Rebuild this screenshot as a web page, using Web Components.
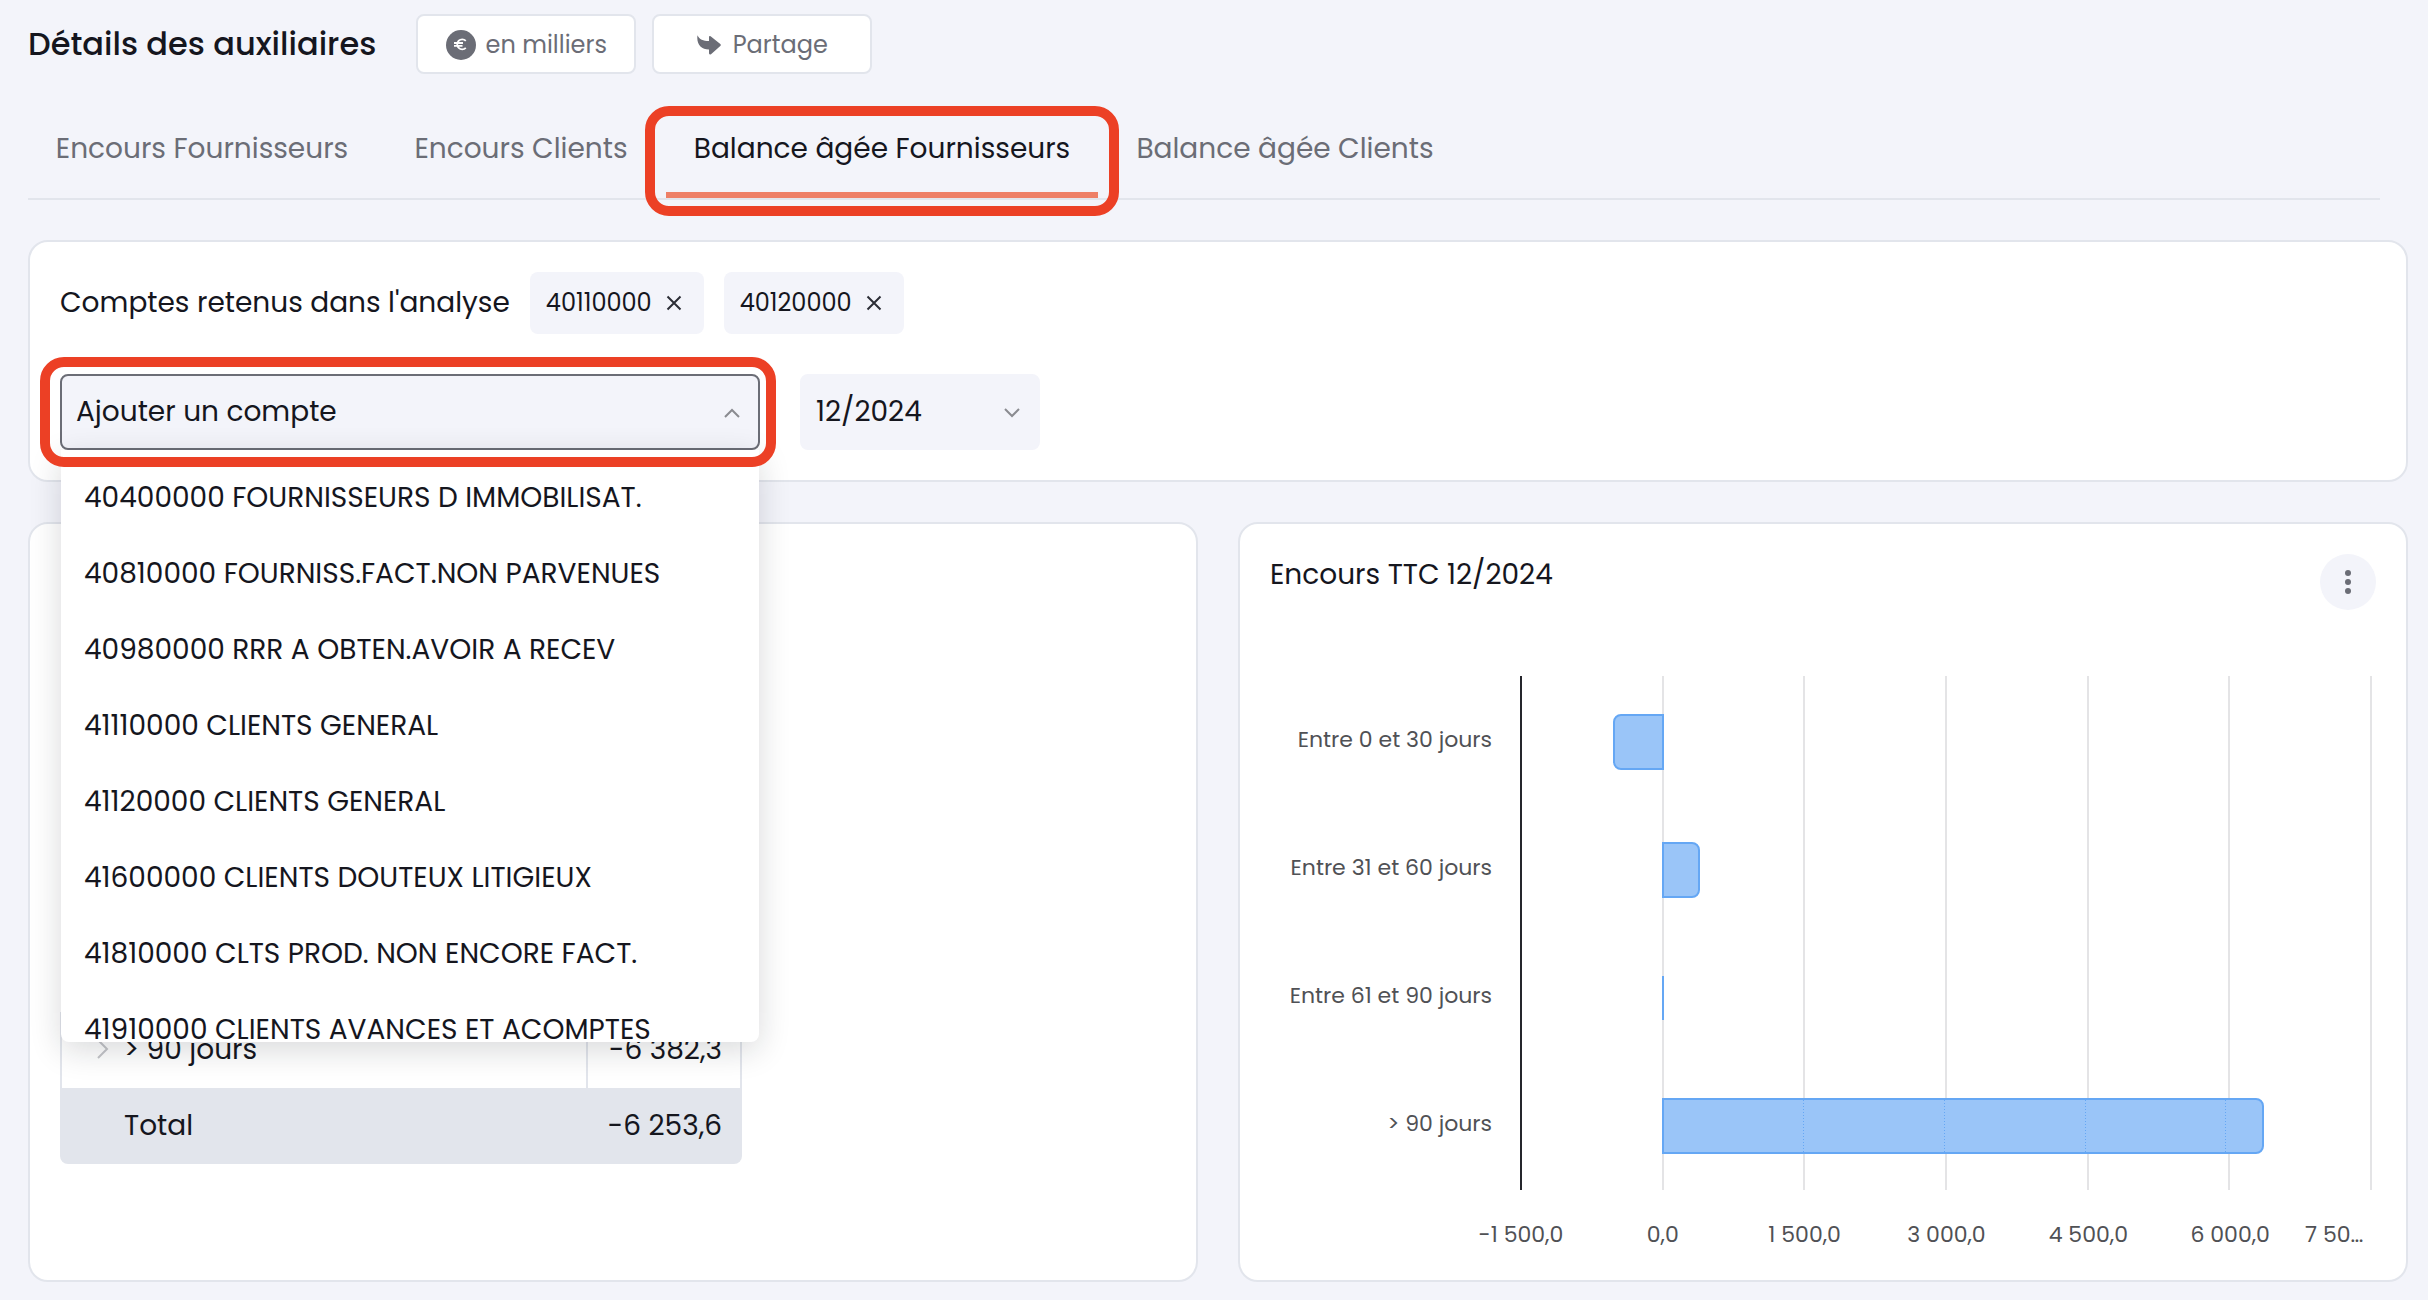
<!DOCTYPE html>
<html lang="fr">
<head>
<meta charset="utf-8">
<title>Détails des auxiliaires</title>
<style>
  html { overflow-x: hidden; }
  body {
    --ink: #15161e;
    --muted: #6b6d76;
    --line: #e2e5ec;
    --soft: #f3f4fa;
    --accent: #ec4025;
    margin: 0;
    background: var(--soft);
    color: var(--ink);
    font-family: Poppins, Inter, "Open Sans", sans-serif;
    font-size: 28px;
    line-height: 40px;
  }
</style>
</head>
<body>
<aux-page></aux-page>

<template id="t-page">
  <style>
    :host { display: flex; flex-direction: column; padding: 14px 20px 18px 28px; }
    .top { display: flex; align-items: center; gap: 16px; }
    h1 { margin: 0 24px 0 0; font-size: 32px; line-height: 60px; font-weight: 500; }
    aux-tabs { margin: 32px 28px 40px 0; }
    .cards { display: grid; grid-template-columns: 1fr 1fr; gap: 40px; margin-top: 40px; }
    .line { display: flex; align-items: center; }
    .chips { gap: 20px; }
    .selects { gap: 40px; margin-top: 40px; }
    aux-table { margin-top: auto; padding-bottom: 86px; }
  </style>
  <header class="top">
    <h1>Détails des auxiliaires</h1>
    <aux-button icon="euro">en milliers</aux-button>
    <aux-button icon="share">Partage</aux-button>
  </header>
  <aux-tabs></aux-tabs>
  <aux-card>
    <div class="line chips">
      <span>Comptes retenus dans l'analyse</span>
      <aux-chip>40110000</aux-chip>
      <aux-chip>40120000</aux-chip>
    </div>
    <div class="line selects">
      <aux-account-picker></aux-account-picker>
      <aux-select label="Période" value="12/2024"></aux-select>
    </div>
  </aux-card>
  <div class="cards">
    <aux-card><aux-table></aux-table></aux-card>
    <aux-card><aux-chart></aux-chart></aux-card>
  </div>
</template>

<template id="t-button">
  <style>
    :host { display: block; }
    button {
      display: flex; align-items: center; justify-content: center; gap: 10px;
      box-sizing: border-box; width: 220px; height: 60px; padding: 2px 0 0;
      border: 2px solid var(--line); border-radius: 8px; background: #fff;
      color: var(--muted); font: inherit; font-size: 24px; line-height: 36px;
    }
    svg { display: block; }
  </style>
  <button type="button"><span class="icon"></span><slot></slot></button>
</template>

<template id="t-tabs">
  <style>
    :host { display: block; border-bottom: 2px solid var(--line); }
    .list { display: grid; grid-template-columns: 348px 270px 432px 354px; gap: 10px; }
    button {
      position: relative; height: 92px; padding: 0; border: 0; border-bottom: 6px solid transparent;
      background: none; color: var(--muted); white-space: nowrap; font: inherit;
    }
    button[aria-selected="true"] { color: var(--ink); border-bottom-color: #ee8067; }
    .ring {
      position: absolute; inset: 0 -21px -24px; pointer-events: none;
      border: 10px solid var(--accent); border-radius: 24px;
    }
  </style>
  <div class="list" role="tablist">
    <button type="button" role="tab" aria-selected="false">Encours Fournisseurs</button>
    <button type="button" role="tab" aria-selected="false">Encours Clients</button>
    <button type="button" role="tab" aria-selected="true">Balance âgée Fournisseurs<span class="ring"></span></button>
    <button type="button" role="tab" aria-selected="false">Balance âgée Clients</button>
  </div>
</template>

<template id="t-card">
  <style>
    :host {
      display: flex; flex-direction: column; padding: 30px;
      border: 2px solid var(--line); border-radius: 20px; background: #fff;
    }
  </style>
  <slot></slot>
</template>

<template id="t-chip">
  <style>
    :host {
      display: flex; align-items: center; gap: 14px; height: 62px; padding: 0 16px;
      border-radius: 8px; background: var(--soft); font-size: 24px;
    }
    button { display: block; padding: 0 6px 0 0; border: 0; background: none; }
    svg { display: block; }
  </style>
  <slot></slot>
  <button type="button" aria-label="Retirer">
    <svg width="16" height="16" viewBox="0 0 16 16" fill="none" stroke="#2c2e36" stroke-width="2"><path d="M1.500 1.500 14.500 14.500M14.500 1.500 1.500 14.500"/></svg>
  </button>
</template>

<template id="t-select">
  <style>
    :host { display: grid; width: 240px; }
    select, svg { grid-area: 1 / 1; }
    select {
      appearance: none; width: 100%; height: 76px; margin: 0; padding: 0 48px 0 14px;
      border: 2px solid var(--soft); border-radius: 8px; background: var(--soft);
      color: var(--ink); font: inherit; outline: 0;
    }
    :host([open]) { width: 100%; }
    :host([open]) select { border-color: var(--muted); }
    :host([open]) svg { transform: rotate(180deg); }
    svg { align-self: center; justify-self: end; margin: 2px 20px 0 0; pointer-events: none; }
  </style>
  <select></select>
  <svg width="16" height="12" viewBox="0 0 16 12" fill="none" stroke="#8a8b90" stroke-width="2"><path d="M1 2 8 9 15 2"/></svg>
</template>

<template id="t-picker">
  <style>
    :host { display: block; position: relative; width: 700px; }
    .ring {
      position: absolute; inset: -17px -16px -17px -20px; z-index: 3; pointer-events: none;
      border: 10px solid var(--accent); border-radius: 24px;
    }
    ul {
      position: absolute; top: 100%; left: 1px; right: 1px; z-index: 2; height: 582px; overflow: hidden;
      margin: 0; padding: 10px 0 0; list-style: none; background: #fff;
      border-radius: 0 0 8px 8px; box-shadow: 0 8px 32px rgba(20, 22, 30, .16);
    }
    li { padding: 0 23px; line-height: 76px; white-space: nowrap; }
  </style>
  <aux-select open label="Compte" value="Ajouter un compte"></aux-select>
  <ul role="listbox" aria-label="Comptes"></ul>
  <span class="ring"></span>
</template>

<template id="t-table">
  <style>
    :host { display: block; }
    table { width: 682px; border-collapse: separate; border-spacing: 0; }
    td { height: 76px; padding: 0; box-sizing: border-box; }
    td:last-child { width: 156px; padding-right: 18px; text-align: right; }
    .row td { border-left: 2px solid var(--line); }
    .row td:last-child { border-right: 2px solid var(--line); }
    .name { display: grid; grid-template-columns: 28px auto; justify-content: start; align-items: center; padding-left: 34px; }
    .total td { background: var(--line); }
    .total td:first-child { padding-left: 64px; border-bottom-left-radius: 8px; }
    .total td:last-child { border-bottom-right-radius: 8px; padding-right: 20px; }
  </style>
  <table>
    <tbody>
      <tr class="row">
        <td><span class="name"><svg width="14" height="22" viewBox="0 0 14 22" fill="none" stroke="#c4c5c9" stroke-width="2"><path d="M2 1 11 10 2 19"/></svg>&gt; 90 jours</span></td>
        <td>-6 382,3</td>
      </tr>
      <tr class="total"><td>Total</td><td>-6 253,6</td></tr>
    </tbody>
  </table>
</template>

<template id="t-chart">
  <style>
    :host { display: block; color: #505155; font-size: 22px; line-height: 32px; }
    header { display: flex; justify-content: space-between; color: var(--ink); }
    h2 { margin: 0; font-size: 28px; line-height: 42px; font-weight: 400; }
    header button {
      display: grid; place-items: center; width: 56px; height: 56px; padding: 0;
      border: 0; border-radius: 50%; background: var(--soft);
    }
    .chart { display: grid; grid-template-columns: 222px 1fr; column-gap: 28px; margin: 66px 4px 0 0; }
    .names { display: grid; grid-template-rows: repeat(4, 128px); align-items: center; text-align: right; }
    .plot { display: grid; height: 514px; border-left: 2px solid #25262c; }
    .lines, .bars { grid-area: 1 / 1; display: grid; }
    .lines { grid-template-columns: repeat(6, 1fr); }
    .lines i { border-right: 2px solid #e4e4e6; }
    .bars { grid-template-rows: repeat(4, 128px); padding-top: 2px; align-items: center; }
    .bar {
      display: flex; box-sizing: border-box; height: 56px; overflow: hidden;
      margin-left: calc(100% / 6 - 2px); border: 2px solid #65a7f4; border-radius: 0 8px 8px 0; background: #9ac5f8;
    }
    .neg { margin-left: calc(100% / 6 - var(--w)); border-radius: 8px 0 0 8px; }
    .thin { height: 44px; border-width: 0 0 0 2px; border-radius: 0; }
    .bar i { flex: none; width: 23.5%; background: repeating-linear-gradient(#65a7f4 0 1px, transparent 1px 3px) right / 1px 100% no-repeat; }
    .ticks {
      grid-column: 2; display: grid; grid-template-columns: repeat(6, 2fr) 1fr;
      margin: 29px 0 0 calc(-100% / 12 + 1px); text-align: center; white-space: nowrap;
      line-height: 31px;
    }
    .ticks span:last-child { text-align: left; padding-left: 4px; }
  </style>
  <header>
    <h2>Encours TTC 12/2024</h2>
    <button type="button" aria-label="Options">
      <svg width="8" height="26" viewBox="0 0 8 26" fill="#6b6d76"><circle cx="4" cy="4" r="3"/><circle cx="4" cy="13" r="3"/><circle cx="4" cy="22" r="3"/></svg>
    </button>
  </header>
  <div class="chart">
    <div class="names"><span>Entre 0 et 30 jours</span><span>Entre 31 et 60 jours</span><span>Entre 61 et 90 jours</span><span>&gt; 90 jours</span></div>
    <div class="plot">
      <div class="lines"><i></i><i></i><i></i><i></i><i></i><i></i></div>
      <div class="bars">
        <div class="bar neg" style="--w: 6%; width: 6%"></div>
        <div class="bar" style="width: 4.5%"></div>
        <div class="bar thin" style="width: 2px"></div>
        <div class="bar" style="width: 70.9%"><i></i><i></i><i></i><i></i></div>
      </div>
    </div>
    <div class="ticks"><span>-1 500,0</span><span>0,0</span><span>1 500,0</span><span>3 000,0</span><span>4 500,0</span><span>6 000,0</span><span>7 50…</span></div>
  </div>
</template>

<script>
  const ICONS = {
    euro: '<svg width="30" height="30" viewBox="0 0 30 30"><circle cx="15" cy="15" r="15" fill="#6b6d76"/><path d="M19.800 10.800A5 5 0 1 0 19.800 17.800M8 13H17M8 15.800H16.500" fill="none" stroke="#fff" stroke-width="1.800"/></svg>',
    share: '<svg width="26" height="20" viewBox="0 0 26 20"><path d="M.5.3C2.500 4.500 6 6 12 6V2Q12 .6 13.600 1.200L23.300 9Q24.300 10 23.300 11L14 19.200Q12 20 12 18.300V14.500C4 14.500-.8 9 .5.300Z" fill="#6b6d76"/></svg>'
  };
  const ACCOUNTS = [
    '40400000 FOURNISSEURS D IMMOBILISAT.',
    '40810000 FOURNISS.FACT.NON PARVENUES',
    '40980000 RRR A OBTEN.AVOIR A RECEV',
    '41110000 CLIENTS GENERAL',
    '41120000 CLIENTS GENERAL',
    '41600000 CLIENTS DOUTEUX LITIGIEUX',
    '41810000 CLTS PROD. NON ENCORE FACT.',
    '41910000 CLIENTS AVANCES ET ACOMPTES'
  ];

  class AuxElement extends HTMLElement {
    constructor() {
      super();
      const template = document.getElementById('t-' + this.constructor.view);
      this.attachShadow({ mode: 'open' }).append(document.importNode(template.content, true));
    }
  }
  class AuxButton extends AuxElement {
    static view = 'button';
    connectedCallback() { this.shadowRoot.querySelector('.icon').innerHTML = ICONS[this.getAttribute('icon')]; }
  }
  class AuxSelect extends AuxElement {
    static view = 'select';
    connectedCallback() {
      const select = this.shadowRoot.querySelector('select');
      select.setAttribute('aria-label', this.getAttribute('label'));
      select.replaceChildren(new Option(this.getAttribute('value')));
    }
  }
  class AuxAccountPicker extends AuxElement {
    static view = 'picker';
    connectedCallback() {
      this.shadowRoot.querySelector('ul').replaceChildren(...ACCOUNTS.map(name => {
        const item = document.createElement('li');
        item.setAttribute('role', 'option');
        item.textContent = name;
        return item;
      }));
    }
  }
  class AuxTabs extends AuxElement { static view = 'tabs'; }
  class AuxCard extends AuxElement { static view = 'card'; }
  class AuxChip extends AuxElement { static view = 'chip'; }
  class AuxTable extends AuxElement { static view = 'table'; }
  class AuxChart extends AuxElement { static view = 'chart'; }
  class AuxPage extends AuxElement { static view = 'page'; }

  customElements.define('aux-button', AuxButton);
  customElements.define('aux-tabs', AuxTabs);
  customElements.define('aux-card', AuxCard);
  customElements.define('aux-chip', AuxChip);
  customElements.define('aux-select', AuxSelect);
  customElements.define('aux-account-picker', AuxAccountPicker);
  customElements.define('aux-table', AuxTable);
  customElements.define('aux-chart', AuxChart);
  customElements.define('aux-page', AuxPage);
</script>
</body>
</html>
